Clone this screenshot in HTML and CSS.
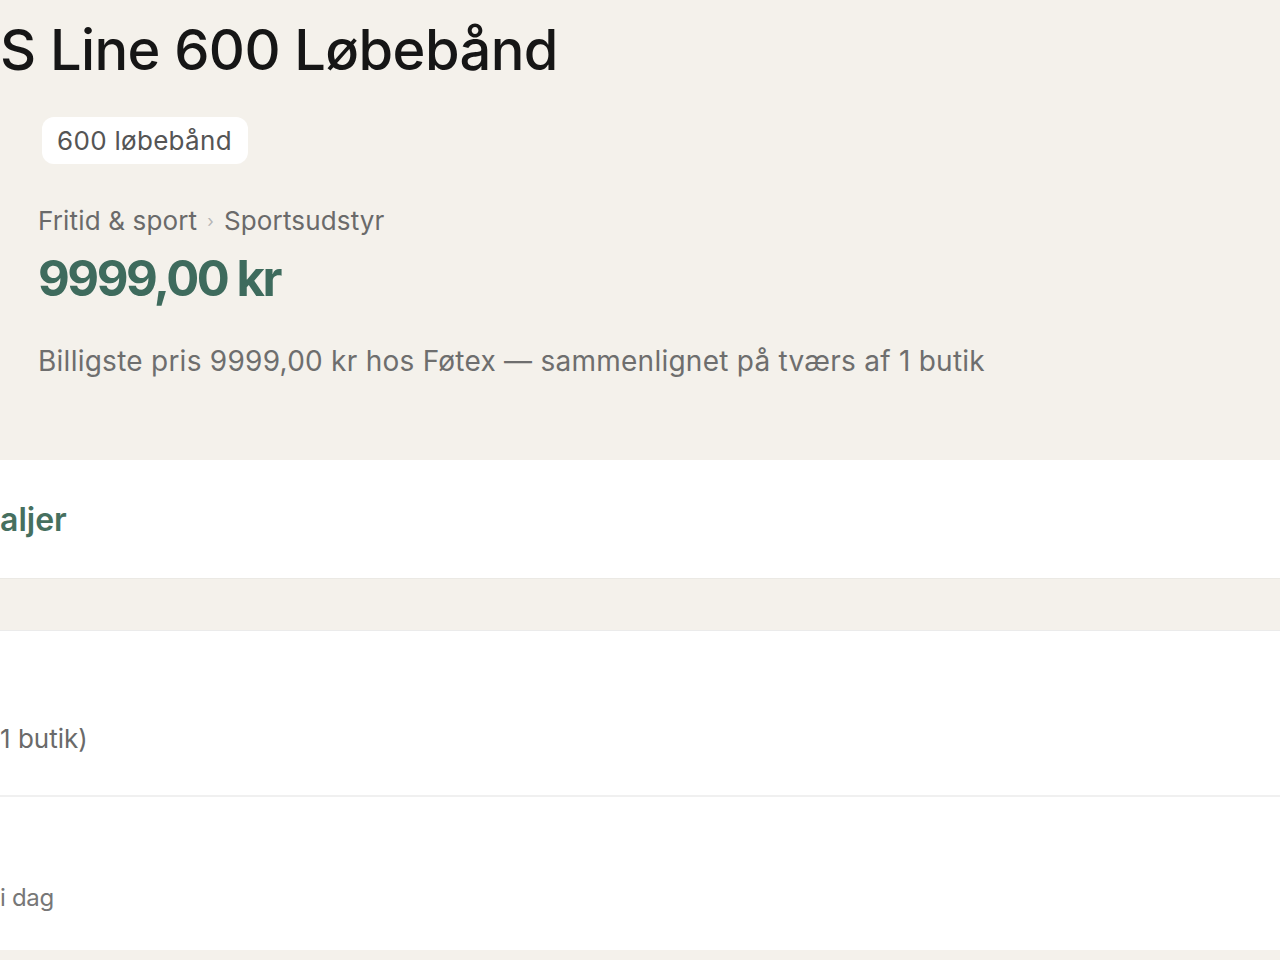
FILE: index.html
```html
<!DOCTYPE html>
<html lang="da">
<head>
<meta charset="utf-8">
<title>Løbebånd</title>
<link rel="stylesheet" href="styles.css">
</head>
<body>
<section class="hero">
  <h1 class="title">S Line 600 Løbebånd</h1>
  <div class="hero-body">
    <span class="chip">600 løbebånd</span>
    <nav class="crumbs"><span>Fritid &amp; sport</span><span class="sep">›</span><span>Sportsudstyr</span></nav>
    <div class="price">9999,00 kr</div>
    <p class="summary">Billigste pris 9999,00 kr hos Føtex — sammenlignet på tværs af 1 butik</p>
  </div>
</section>
<section class="panel head-panel">
  <h2 class="panel-title">aljer</h2>
</section>
<div class="gap"></div>
<section class="panel list-panel">
  <div class="row row-first"><span class="row-text">1 butik)</span></div>
  <div class="row row-second"><span class="row-text small">i dag</span></div>
</section>
</body>
</html>
```
FILE: styles.css
```css
* { box-sizing: border-box; }
html, body { margin: 0; padding: 0; }
body {
  background: #f4f1eb;
  font-family: "Inter", "Noto Sans", sans-serif;
  color: #1c1c1c;
  width: 1280px;
  height: 960px;
  overflow: hidden;
}
.hero {
  height: 460px;
  padding-top: 18px;
}
.title {
  margin: 0;
  font-size: 56px;
  font-weight: 500;
  line-height: 64px;
  letter-spacing: -0.6px;
  color: #161616;
}
.hero-body {
  padding-left: 38px;
  display: flex;
  flex-direction: column;
  align-items: flex-start;
}
.chip {
  margin-top: 35px;
  margin-left: 4px;
  background: #fff;
  border-radius: 12px;
  padding: 0 16px 0 15px;
  height: 47px;
  display: inline-flex;
  align-items: center;
  font-size: 26px;
  letter-spacing: 0.3px;
  color: #555;
}
.crumbs {
  margin-top: 42px;
  display: flex;
  align-items: center;
  gap: 10px;
  font-size: 26px;
  letter-spacing: 0.15px;
  color: #6a6a6a;
  line-height: 30px;
}
.crumbs .sep { font-size: 17px; color: #b5b5b5; }
.price {
  margin-top: 13px;
  font-size: 49px;
  font-weight: 700;
  color: #3e6b5d;
  letter-spacing: -2.5px;
  line-height: 60px;
}
.summary {
  margin: 34px 0 0;
  font-size: 28px;
  letter-spacing: 0.25px;
  line-height: 36px;
  color: #6e6e6e;
}
.panel { background: #fff; }
.head-panel {
  height: 118px;
  display: flex;
  align-items: center;
  box-shadow: 0 1px 0 #ebe9e4;
}
.panel-title {
  margin: 0;
  font-size: 32px;
  font-weight: 600;
  color: #46705f;
}
.gap {
  height: 52px;
  border-top: 1px solid #ebe9e4;
}
.list-panel {
  border-top: 1px solid #ebebeb;
  height: 320px;
}
.row {
  display: flex;
  align-items: flex-end;
}
.row-first {
  height: 166px;
  padding-bottom: 41px;
  border-bottom: 2px solid #f0f0f0;
}
.row-second {
  height: 154px;
  padding-bottom: 39px;
}
.row-text {
  font-size: 26px;
  color: #6a6a6a;
}
.row-text.small { font-size: 24px; letter-spacing: -0.3px; color: #777; }
```
